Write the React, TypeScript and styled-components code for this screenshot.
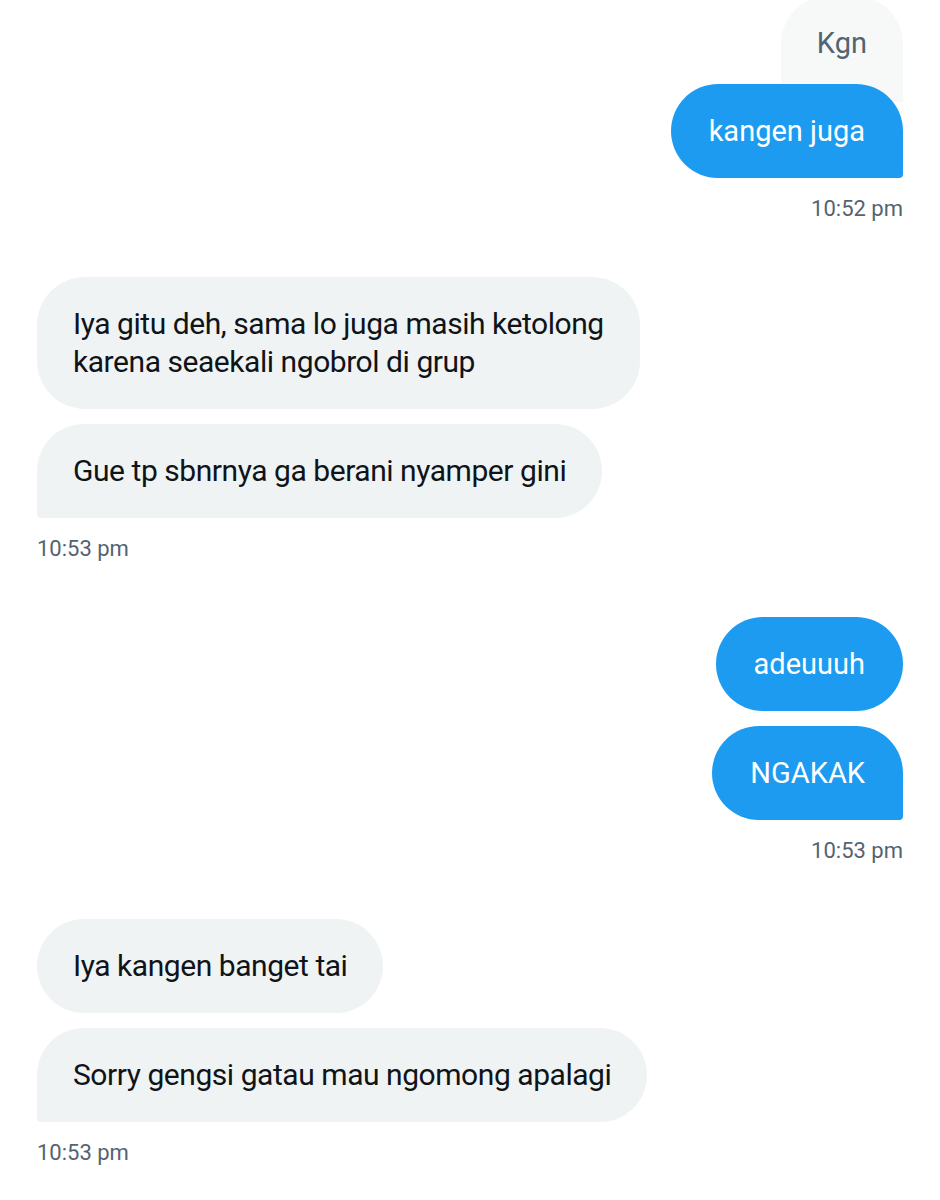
import React from 'react';
import styled, { createGlobalStyle } from 'styled-components';

const GlobalStyle = createGlobalStyle`
  html, body {
    margin: 0;
    padding: 0;
    background: #ffffff;
  }
  body {
    font-family: Roboto, "Liberation Sans", sans-serif;
    overflow: hidden;
  }
`;

const Thread = styled.div`
  display: flex;
  flex-direction: column;
  padding: 0 37px;
  width: 940px;
  box-sizing: border-box;
`;

const Group = styled.div<{ mine?: boolean }>`
  display: flex;
  flex-direction: column;
  align-items: ${({ mine }) => (mine ? 'flex-end' : 'flex-start')};
  gap: 15px;
  margin-bottom: 56px;
`;

// quoted message sitting behind the reply bubble
const ReplyPreview = styled.div`
  margin-top: -4px;
  margin-bottom: -33px;
  padding: 28px 36px 40px;
  border-radius: 48px 48px 0 0;
  background: #f7f9f9;
  color: #536471;
  font-size: 29px;
  line-height: 38px;
`;

const Bubble = styled.div<{ mine?: boolean; tail?: boolean }>`
  position: relative;
  max-width: 600px;
  padding: ${({ mine }) => (mine ? '28px 38px' : '28px 36px')};
  font-size: ${({ mine }) => (mine ? '29px' : '30px')};
  line-height: 38px;
  background: ${({ mine }) => (mine ? '#1d9bf0' : '#eff3f4')};
  color: ${({ mine }) => (mine ? '#ffffff' : '#0f1419')};
  border-radius: ${({ mine, tail }) =>
    tail ? (mine ? '48px 48px 4px 48px' : '48px 48px 48px 4px') : '48px'};
  letter-spacing: ${({ mine }) => (mine ? '0' : '-0.45px')};
`;

const Time = styled.div`
  margin-top: 4px;
  font-size: 22px;
  line-height: 24px;
  color: #536471;
`;

const messages: { mine: boolean; time: string; items: string[][]; reply?: string }[] = [
  { mine: true, time: '10:52 pm', reply: 'Kgn', items: [['kangen juga']] },
  {
    mine: false,
    time: '10:53 pm',
    items: [
      ['Iya gitu deh, sama lo juga masih ketolong', 'karena seaekali ngobrol di grup'],
      ['Gue tp sbnrnya ga berani nyamper gini'],
    ],
  },
  { mine: true, time: '10:53 pm', items: [['adeuuuh'], ['NGAKAK']] },
  {
    mine: false,
    time: '10:53 pm',
    items: [['Iya kangen banget tai'], ['Sorry gengsi gatau mau ngomong apalagi']],
  },
];

export default function App() {
  return (
    <>
      <GlobalStyle />
      <Thread>
        {messages.map((g, gi) => (
          <Group key={gi} mine={g.mine}>
            {g.reply && <ReplyPreview>{g.reply}</ReplyPreview>}
            {g.items.map((lines, i) => (
              <Bubble key={i} mine={g.mine} tail={i === g.items.length - 1}>
                {lines.map((l, li) => (
                  <div key={li}>{l}</div>
                ))}
              </Bubble>
            ))}
            <Time>{g.time}</Time>
          </Group>
        ))}
      </Thread>
    </>
  );
}
